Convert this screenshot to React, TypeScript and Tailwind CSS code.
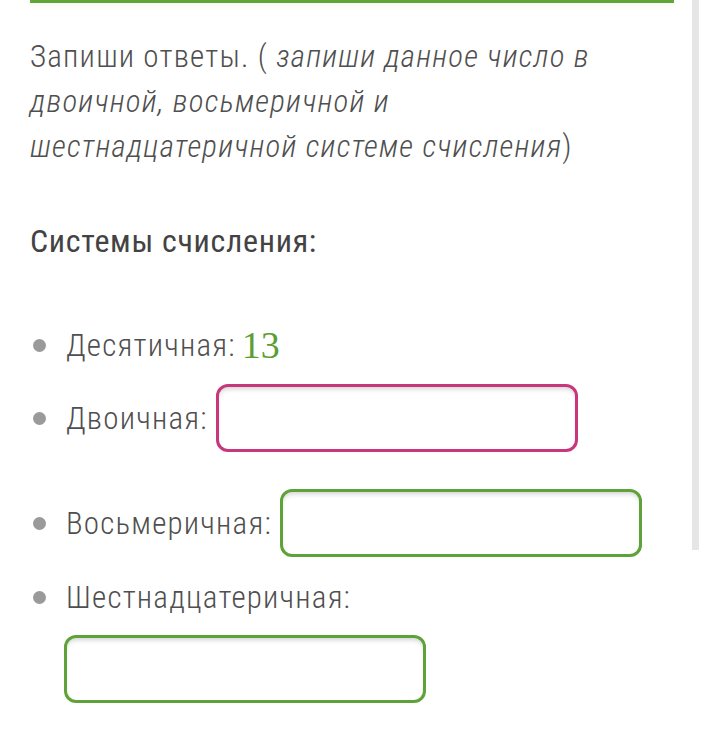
const font = "font-['Roboto',sans-serif] [font-stretch:condensed]";

function Bullet() {
  return <span className="ml-[3px] mr-[20px] h-[13px] w-[13px] shrink-0 rounded-full bg-[#9a9a9a]" />;
}

function AnswerBox({ color }: { color: "pink" | "green" }) {
  const border = color === "pink" ? "border-[#c8377c]" : "border-[#5fa23a]";
  return (
    <div
      className={`h-[68px] w-[362px] shrink-0 rounded-[12px] border-[3px] bg-white shadow-[inset_0_4px_5px_-2px_rgba(0,0,0,0.18)] ${border}`}
    />
  );
}

export default function App() {
  return (
    <div className={`relative min-h-[751px] w-[704px] bg-white ${font}`}>
      <div className="absolute right-[5px] top-0 h-[550px] w-[7px] bg-[#e6e6e6]" />
      <div className="ml-[30px] w-[644px]">
        <div className="h-[3px] bg-[#5fa639] shadow-[0_2px_6px_rgba(120,160,60,0.12)]" />

        <p className="mt-[31px] max-w-[620px] text-[31px] font-light leading-[45px] tracking-[1.2px] text-[#4f4f4f]">
          Запиши ответы. ({" "}
          <i>запиши данное число в двоичной, восьмеричной и шестнадцатеричной системе счисления</i>)
        </p>

        <h3 className="mt-[50px] text-[32px] font-normal leading-[45px] tracking-[0.7px] text-[#434343]">
          Системы счисления:
        </h3>

        <ul className="mt-[59px] flex flex-col text-[31px] font-light leading-[45px] tracking-[1.2px] text-[#4f4f4f]">
          <li className="flex items-center">
            <Bullet />
            <span>Десятичная:</span>
            <span className="ml-[6px] font-['Liberation_Serif',serif] text-[38px] font-normal tracking-normal text-[#5a9f33] [font-stretch:normal]">
              13
            </span>
          </li>
          <li className="mt-[16px] flex items-center gap-[8px]">
            <Bullet />
            <span className="-ml-[8px]">Двоичная:</span>
            <AnswerBox color="pink" />
          </li>
          <li className="mt-[37px] flex items-center gap-[8px]">
            <Bullet />
            <span className="-ml-[8px]">Восьмеричная:</span>
            <AnswerBox color="green" />
          </li>
          <li className="mt-[18px] flex flex-col">
            <div className="flex items-center">
              <Bullet />
              <span>Шестнадцатеричная:</span>
            </div>
            <div className="ml-[34px] mt-[15px]">
              <AnswerBox color="green" />
            </div>
          </li>
        </ul>
      </div>
    </div>
  );
}
